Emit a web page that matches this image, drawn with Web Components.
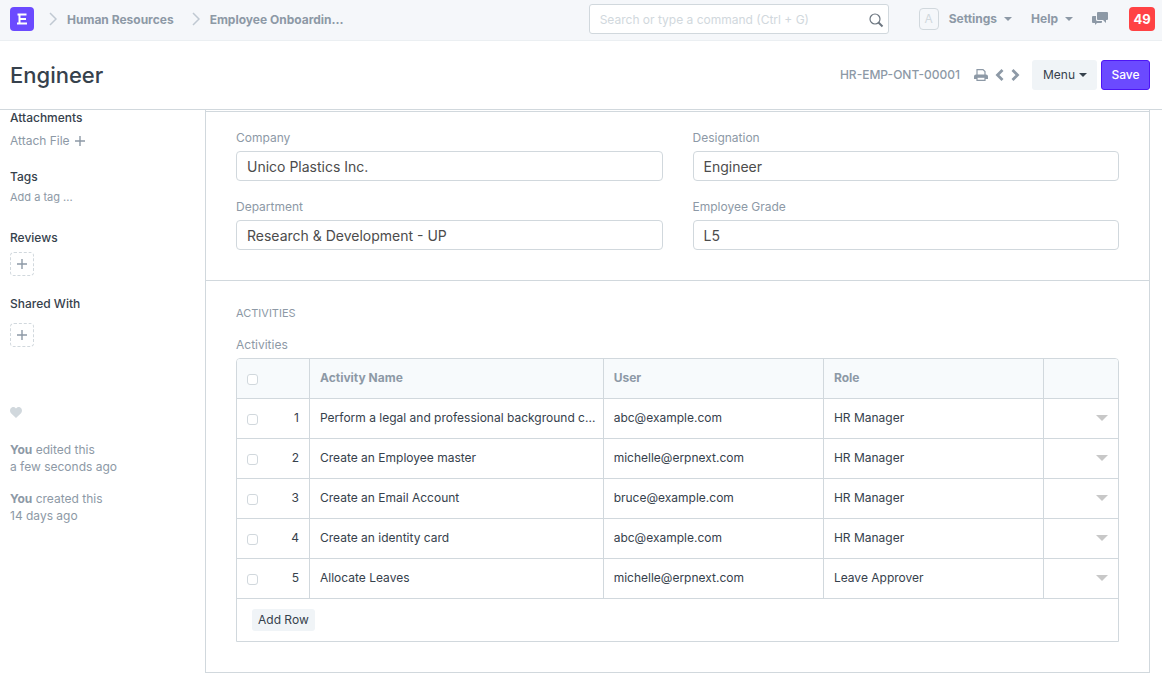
<!DOCTYPE html>
<html lang="en">
<head>
<meta charset="utf-8">
<meta name="viewport" content="width=device-width, initial-scale=1">
<title>Engineer</title>
<style>
  html {
    --text: #36414c;
    --muted: #8d99a6;
    --line: #d1d8dd;
    --brand: #6b4aff;
    --soft: #f0f4f7;
  }
  body {
    margin: 0;
    background: #fff;
    color: var(--text);
    font: 12px/18px Inter, "Open Sans", sans-serif;
  }
</style>
</head>
<body>
<erp-navbar></erp-navbar>
<erp-page-head heading="Engineer" docname="HR-EMP-ONT-00001"></erp-page-head>
<erp-layout>
  <erp-sidebar slot="side"></erp-sidebar>
  <erp-section>
    <erp-fields>
      <erp-field label="Company" value="Unico Plastics Inc."></erp-field>
      <erp-field label="Designation" value="Engineer"></erp-field>
      <erp-field label="Department" value="Research &amp; Development - UP"></erp-field>
      <erp-field label="Employee Grade" value="L5"></erp-field>
    </erp-fields>
  </erp-section>
  <erp-section heading="ACTIVITIES">
    <erp-grid label="Activities"></erp-grid>
  </erp-section>
</erp-layout>

<script>
const base = `
  *, *::before, *::after { box-sizing: border-box; }
  :host { display: block; }
  button, input { font: inherit; color: inherit; margin: 0; }
  button { border: 0; background: none; padding: 0; cursor: pointer; }
  a { color: inherit; text-decoration: none; }
  svg { display: block; flex: none; }
`;

function define(name, render) {
  customElements.define(name, class extends HTMLElement {
    constructor() {
      super();
      this.attachShadow({ mode: "open" });
    }
    connectedCallback() {
      const t = document.createElement("template");
      t.innerHTML = render(this);
      this.shadowRoot.replaceChildren(t.content.cloneNode(true));
    }
  });
}

const esc = s => (s || "").replace(/&/g, "&amp;").replace(/"/g, "&quot;").replace(/</g, "&lt;");

define("erp-navbar", () => `
<style>${base}
  :host { background: #f5f7fa; border-bottom: 1px solid #ebeff2; color: var(--muted); font-weight: 700; }
  nav { display: flex; align-items: center; height: 40px; padding: 0 7px 3px 10px; }
  .logo { width: 24px; height: 24px; border-radius: 4px; background: var(--brand); color: #fff; display: grid; place-items: center; }
  .crumbs { display: flex; align-items: center; margin-left: 15px; }
  .crumbs a { margin: 0 18px 0 10px; padding-top: 2px; }
  .search { position: relative; width: 300px; margin-left: auto; }
  .search input { display: block; width: 100%; height: 30px; padding: 2px 30px 0 10px; border: 1px solid var(--line); border-radius: 3px; background: #fff; color: var(--text); font-weight: 400; outline: 0; }
  .search input::placeholder { color: #d1d8dd; opacity: 1; }
  .search svg { position: absolute; right: 5px; top: 8px; }
  .avatar { width: 20px; height: 22px; margin-left: 30px; border: 1px solid var(--line); border-radius: 4px; color: var(--line); font-weight: 400; display: grid; place-items: center; }
  .drop { display: flex; align-items: center; gap: 7px; margin-left: 10px; font-weight: 700; }
  .drop + .drop { margin-left: 19px; }
  .chat { margin-left: 19px; }
  .count { margin-left: 21px; width: 26px; height: 24px; border-radius: 4px; background: #ff4244; color: #fff; font-size: 13px; font-weight: 700; }
</style>
<nav>
  <a class="logo" href="#" aria-label="Home"><svg width="12" height="14" viewBox="0 0 12 14" fill="none" stroke="#fff" stroke-width="2"><path d="M1.500 2.500H10.500M3 7H10M1 11.500H11M3.500 2.500V11.500"/></svg></a>
  <div class="crumbs">
    <svg width="8" height="14" viewBox="0 0 8 14" fill="none" stroke="#c0c9d2" stroke-width="1.5"><path d="M1 1l6 6-6 6"/></svg>
    <a href="#">Human Resources</a>
    <svg width="8" height="14" viewBox="0 0 8 14" fill="none" stroke="#c0c9d2" stroke-width="1.5"><path d="M1 1l6 6-6 6"/></svg>
    <a href="#">Employee Onboardin...</a>
  </div>
  <div class="search">
    <input type="text" aria-label="Search" placeholder="Search or type a command (Ctrl + G)">
    <svg width="16" height="16" viewBox="0 0 16 16" fill="none" stroke="#6c7680"><circle cx="7" cy="7" r="5" stroke-width="1.2"/><path d="M10.500 10.500L14.500 14.500" stroke-width="2"/></svg>
  </div>
  <span class="avatar">A</span>
  <button class="drop">Settings <svg width="8" height="4" viewBox="0 0 8 4"><path d="M0 0h8L4 4z" fill="#8d99a6"/></svg></button>
  <button class="drop">Help <svg width="8" height="4" viewBox="0 0 8 4"><path d="M0 0h8L4 4z" fill="#8d99a6"/></svg></button>
  <button class="chat" aria-label="Chat"><svg width="16" height="13" viewBox="0 0 16 13" fill="#8d99a6"><path d="M6 0h9a1 1 0 0 1 1 1v6a1 1 0 0 1-1 1h-1v3l-3-3H6a1 1 0 0 1-1-1V1a1 1 0 0 1 1-1z"/><path d="M1 4h3v3.500A1.500 1.500 0 0 0 5.500 9H10v1a1 1 0 0 1-1 1H5l-2 2v-2H1a1 1 0 0 1-1-1V5a1 1 0 0 1 1-1z"/></svg></button>
  <button class="count">49</button>
</nav>`);

define("erp-page-head", el => `
<style>${base}
  :host { border-bottom: 1px solid var(--line); }
  header { display: flex; align-items: center; height: 68px; padding: 0 12px 0 10px; }
  h1 { margin: 0 auto 0 0; font-size: 22px; line-height: 32px; font-weight: 500; }
  .id { color: var(--muted); font-weight: 500; }
  .tools { display: flex; align-items: center; gap: 7px; margin: 0 12px 0 14px; }
  .btn { height: 30px; border-radius: 3px; padding: 0 10px; }
  .menu { display: flex; align-items: center; gap: 4px; background: var(--soft); width: 65px; padding-left: 11px; }
  .save { margin-left: 4px; background: var(--brand); border: 1px solid #4d15f5; color: #fff; font-weight: 500; width: 49px; padding: 0; }
</style>
<header>
  <h1>${esc(el.getAttribute("heading"))}</h1>
  <span class="id">${esc(el.getAttribute("docname"))}</span>
  <div class="tools">
    <button aria-label="Print"><svg width="14" height="12" viewBox="0 0 14 12"><path d="M3 6V.6h6L11 2.600V6" fill="none" stroke="#8d99a6" stroke-width="1.200"/><path d="M2 5.500h10a2 2 0 0 1 2 2V10H0V7.500a2 2 0 0 1 2-2z" fill="#8d99a6"/><path d="M3 8.200h8v3.200H3z" fill="#fff" stroke="#8d99a6" stroke-width="1.200"/></svg></button>
    <button aria-label="Previous"><svg width="9" height="12" viewBox="0 0 9 12" fill="none" stroke="#8d99a6" stroke-width="2.800"><path d="M7.500 1L2.500 6l5 5"/></svg></button>
    <button aria-label="Next"><svg width="9" height="12" viewBox="0 0 9 12" fill="none" stroke="#8d99a6" stroke-width="2.800"><path d="M1.500 1l5 5-5 5"/></svg></button>
  </div>
  <button class="btn menu">Menu <svg width="8" height="4" viewBox="0 0 8 4"><path d="M0 0h8L4 4z" fill="#36414c"/></svg></button>
  <button class="btn save">Save</button>
</header>`);

define("erp-layout", () => `
<style>${base}
  :host { display: grid; grid-template-columns: 205px minmax(0, 1fr); padding-right: 12px; }
  main { border: 1px solid var(--line); border-top: 0; padding-top: 1px; }
</style>
<slot name="side"></slot>
<main><slot></slot></main>`);

define("erp-sidebar", () => `
<style>${base}
  :host { padding: 0 10px; color: var(--muted); }
  h2 { margin: 0; font-size: 12px; line-height: 16px; font-weight: 500; color: var(--text); }
  section { display: flex; flex-direction: column; align-items: flex-start; }
  .attach { display: flex; align-items: center; gap: 5px; margin-top: 6px; }
  .tags { margin-top: 19px; }
  .tag { font-size: 11px; margin-top: 3px; }
  .reviews { margin-top: 24px; }
  .shared { margin-top: 20px; }
  .add { width: 24px; height: 24px; border: 1px dashed var(--line); border-radius: 4px; display: grid; place-items: center; margin-top: 6px; }
  .shared .add { margin-top: 11px; }
  .like { margin-top: 60px; }
  p { margin: 15px 0 0; line-height: 17px; }
  .like + p { margin-top: 18px; }
</style>
<section>
  <h2>Attachments</h2>
  <a class="attach" href="#">Attach File <svg width="10" height="10" viewBox="0 0 10 10" stroke="#8d99a6" stroke-width="1.400"><path d="M5 0v10M0 5h10"/></svg></a>
</section>
<section class="tags">
  <h2>Tags</h2>
  <a class="tag" href="#">Add a tag ...</a>
</section>
<section class="reviews">
  <h2>Reviews</h2>
  <button class="add" aria-label="Add review"><svg width="10" height="10" viewBox="0 0 10 10" stroke="#8d99a6" stroke-width="1.400"><path d="M5 0v10M0 5h10"/></svg></button>
</section>
<section class="shared">
  <h2>Shared With</h2>
  <button class="add" aria-label="Share"><svg width="10" height="10" viewBox="0 0 10 10" stroke="#8d99a6" stroke-width="1.400"><path d="M5 0v10M0 5h10"/></svg></button>
</section>
<button class="like" aria-label="Like"><svg width="12" height="11" viewBox="0 0 12 11" fill="#d1d8dd"><path d="M6 11L1 6.200C-.6 4.500-.2 1.400 1.800.4 3.400-.4 5.200.2 6 1.600 6.800.2 8.600-.4 10.200.4c2 1 2.400 4.100.8 5.800z"/></svg></button>
<p><b>You</b> edited this<br>a few seconds ago</p>
<p><b>You</b> created this<br>14 days ago</p>`);

define("erp-section", el => `
<style>${base}
  :host { border-top: 1px solid var(--line); padding: 17px 30px 30px; }
  h3 { margin: 7px 0 15px; font-size: 11px; line-height: 16px; font-weight: 400; color: var(--muted); }
</style>
${el.hasAttribute("heading") ? `<h3>${esc(el.getAttribute("heading"))}</h3>` : ""}
<slot></slot>`);

define("erp-fields", () => `
<style>${base}
  :host { display: grid; grid-template-columns: repeat(2, minmax(0, 1fr)); gap: 17px 30px; }
</style>
<slot></slot>`);

define("erp-field", el => `
<style>${base}
  label { display: block; color: var(--muted); margin-bottom: 4px; }
  input { display: block; width: 100%; height: 30px; padding: 0 10px; border: 1px solid var(--line); border-radius: 4px; background: #fff; color: #4c4c4c; font-size: 14px; outline: 0; }
</style>
<label for="f">${esc(el.getAttribute("label"))}</label>
<input id="f" type="text" value="${esc(el.getAttribute("value"))}">`);

const activities = [
  ["Perform a legal and professional background c...", "abc@example.com", "HR Manager"],
  ["Create an Employee master", "michelle@erpnext.com", "HR Manager"],
  ["Create an Email Account", "bruce@example.com", "HR Manager"],
  ["Create an identity card", "abc@example.com", "HR Manager"],
  ["Allocate Leaves", "michelle@erpnext.com", "Leave Approver"],
];

define("erp-grid", el => `
<style>${base}
  .label { color: var(--muted); margin-bottom: 4px; }
  .box { border: 1px solid var(--line); border-radius: 4px 4px 0 0; overflow: hidden; }
  table { width: 100%; table-layout: fixed; border-collapse: separate; border-spacing: 0; }
  .index { width: 72px; }
  .wide { width: calc(100% / 3); }
  .mid { width: 25%; }
  th, td { height: 40px; padding: 0 4px 2px 10px; border-bottom: 1px solid var(--line); text-align: left; white-space: nowrap; overflow: hidden; text-overflow: ellipsis; font-weight: 400; }
  th + th, td + td { border-left: 1px solid var(--line); }
  td:first-child, td:last-child { padding-right: 10px; }
  th { background: #f7fafc; color: var(--muted); font-weight: 700; }
  .pick { display: flex; align-items: center; justify-content: space-between; height: 18px; }
  input { appearance: none; display: block; width: 11px; height: 11px; margin-top: 4px; border: 1px solid var(--line); border-radius: 3px; background: #fff; }
  td button { display: block; margin-left: auto; }
  .foot { padding: 10px 15px; }
  .foot button { display: block; height: 22px; padding: 0 6px; border-radius: 3px; background: var(--soft); }
</style>
<div class="label">${esc(el.getAttribute("label"))}</div>
<div class="box">
  <table>
    <colgroup><col class="index"><col class="wide"><col class="mid"><col class="mid"><col></colgroup>
    <thead><tr>
      <th><div class="pick"><input type="checkbox" aria-label="Select all rows"></div></th>
      <th>Activity Name</th><th>User</th><th>Role</th><th></th>
    </tr></thead>
    <tbody>${activities.map((r, i) => `
      <tr>
        <td><div class="pick"><input type="checkbox" aria-label="Select row ${i + 1}"><span>${i + 1}</span></div></td>
        ${r.map(c => `<td>${c}</td>`).join("")}
        <td><button aria-label="Open row ${i + 1}"><svg width="12" height="6" viewBox="0 0 12 6"><path d="M0 0h12L6 6z" fill="#c8c8c8"/></svg></button></td>
      </tr>`).join("")}
    </tbody>
  </table>
  <div class="foot"><button>Add Row</button></div>
</div>`);
</script>
</body>
</html>
